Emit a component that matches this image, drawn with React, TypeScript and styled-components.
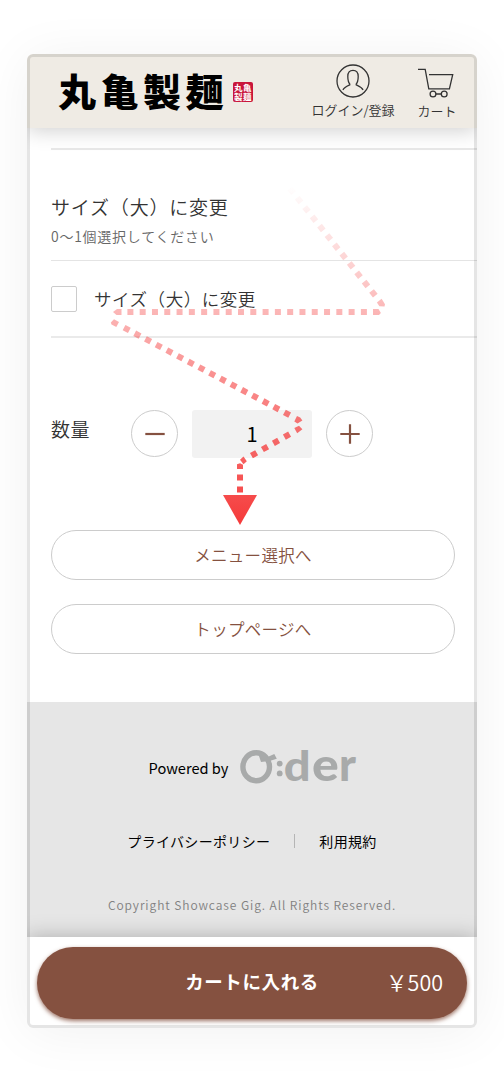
import React from 'react';
import styled, { createGlobalStyle } from 'styled-components';

const GlobalStyle = createGlobalStyle`
  * { box-sizing: border-box; }
  body {
    margin: 0;
    background: #fff;
    font-family: "Noto Sans CJK JP", "Noto Sans", sans-serif;
    font-weight: 350;
    color: #333;
  }
  button { font-family: inherit; font-weight: inherit; margin: 0; padding: 0; cursor: pointer; }
`;

const Page = styled.div`
  height: 1077px;
  padding: 54px 27px 0;
  overflow: hidden;
`;

const Phone = styled.div`
  position: relative;
  display: flex;
  flex-direction: column;
  width: 450px;
  height: 974px;
  border-radius: 6px;
  overflow: hidden;
  background: #fff;
`;

const Glow = styled.div`
  width: 450px;
  border-radius: 6px;
  box-shadow: 0 4px 54px rgba(0, 0, 0, 0.06);
`;

const Bezel = styled.div`
  position: absolute;
  inset: 0;
  z-index: 5;
  border: 3px solid rgba(0, 0, 0, 0.1);
  border-radius: 6px;
  pointer-events: none;
`;

const Header = styled.header`
  position: relative;
  z-index: 2;
  display: flex;
  flex: none;
  height: 74px;
  padding-left: 31px;
  background: #efebe4;
  box-shadow: 0 2px 20px rgba(0, 0, 0, 0.2);
`;

const Brand = styled.div`
  display: flex;
  width: 245px;
  align-items: flex-start;
`;

const BrandName = styled.div`
  width: 175px;
  height: 74px;
  line-height: 72px;
  font-size: 38px;
  font-weight: 900;
  letter-spacing: 4.5px;
  color: #000;
  white-space: nowrap;
`;

const Seal = styled.div`
  display: grid;
  grid-template-columns: 9px 9px;
  grid-template-rows: 9px 9px;
  place-content: center;
  width: 20px;
  height: 20px;
  margin-top: 28px;
  border-radius: 2px;
  background: #c9163b;
  color: #fff;
  font-size: 8.5px;
  font-weight: 700;
  line-height: 8.5px;
`;

const HeaderLink = styled.div<{ $width: number; $top: number }>`
  display: flex;
  flex-direction: column;
  align-items: center;
  width: ${(p) => p.$width}px;
  padding-top: ${(p) => p.$top}px;
  font-size: 13px;
  line-height: 16px;
  white-space: nowrap;
  svg { display: block; }
`;

const HeaderLabel = styled.span`
  margin-top: 4px;
`;

const Main = styled.main`
  flex: none;
  height: 574px;
  padding: 20px 0 0 24px;
`;

const OptionHead = styled.div`
  height: 113px;
  padding-top: 43px;
  border-top: 2px solid #e8e8e8;
  border-bottom: 1px solid #e4e4e4;
`;

const OptionTitle = styled.div`
  font-size: 19px;
  line-height: 28px;
  letter-spacing: 0.8px;
`;

const OptionNote = styled.div`
  margin-top: 5px;
  font-size: 14px;
  line-height: 20px;
  letter-spacing: 0.75px;
  color: #666;
`;

const OptionRow = styled.label`
  display: flex;
  align-items: center;
  height: 77px;
  border-bottom: 2px solid #eaeaea;
  font-size: 17.5px;
  letter-spacing: 0.55px;
`;

const CheckBox = styled.span`
  width: 26px;
  height: 26px;
  margin-right: 17px;
  border: 1px solid #ccc;
  border-radius: 2px;
`;

const Quantity = styled.div`
  display: flex;
  align-items: center;
  height: 48px;
  margin-top: 72px;
`;

const QuantityLabel = styled.span`
  width: 80px;
  margin-top: -11px;
  font-size: 19px;
  letter-spacing: 0.4px;
`;

const RoundButton = styled.button`
  display: flex;
  align-items: center;
  justify-content: center;
  width: 47px;
  height: 47px;
  margin-bottom: 1px;
  border: 1px solid #ccc;
  border-radius: 50%;
  background: #fff;
`;

const Amount = styled.div`
  width: 120px;
  height: 48px;
  margin: 0 14px;
  border-radius: 3px;
  background: #f2f2f2;
  color: #000;
  font-size: 20px;
  font-weight: 400;
  line-height: 48px;
  text-align: center;
`;

const LinkList = styled.div`
  display: flex;
  flex-direction: column;
  gap: 24px;
  width: 404px;
  margin-top: 72px;
`;

const PillLink = styled.button`
  height: 50px;
  border: 1px solid #ccc;
  border-radius: 25px;
  background: #fff;
  color: #855140;
  font-size: 16.5px;
  letter-spacing: 0.3px;
`;

const Footer = styled.footer`
  display: flex;
  flex: none;
  flex-direction: column;
  align-items: center;
  height: 235px;
  background: #e6e6e6;
  color: #000;
`;

const Powered = styled.div`
  display: flex;
  align-items: center;
  gap: 12px;
  height: 36px;
  margin-top: 47px;
  padding-left: 1px;
  font-size: 14.6px;
  font-weight: 400;
  white-space: nowrap;
`;

const Policies = styled.div`
  display: flex;
  align-items: center;
  height: 20px;
  margin-top: 46px;
  font-size: 14px;
  letter-spacing: 0.33px;
  font-weight: 400;
`;

const Divider = styled.span`
  width: 1px;
  height: 14px;
  margin: 0 24px;
  background: #b5b5b5;
`;

const Copyright = styled.div`
  margin-top: 44px;
  font-size: 12px;
  line-height: 20px;
  letter-spacing: 0.92px;
  color: #808080;
  white-space: nowrap;
`;

const BottomBar = styled.div`
  position: relative;
  z-index: 2;
  flex: 1;
  padding: 10px 10px 0;
  background: #fff;
  box-shadow: 0 0 20px rgba(0, 0, 0, 0.25);
`;

const AddButton = styled.button`
  display: grid;
  grid-template-columns: 1fr auto 1fr;
  align-items: center;
  width: 430px;
  height: 72px;
  padding-bottom: 4px;
  border: 0;
  border-radius: 36px;
  background: #855140;
  box-shadow: 0 2px 4px rgba(133, 81, 64, 0.8);
  color: #fff;
`;

const AddLabel = styled.span`
  grid-column: 2;
  font-size: 18.5px;
  font-weight: 700;
  letter-spacing: 0.6px;
`;

const Price = styled.span`
  justify-self: end;
  margin-right: 24px;
  font-size: 21.5px;
`;

const Trail = styled.svg`
  position: absolute;
  left: 0;
  top: 0;
  z-index: 4;
  pointer-events: none;
`;

const UserIcon = () => (
  <svg width="34" height="34" viewBox="0 0 34 34" fill="none" stroke="#333" strokeWidth="1.3">
    <circle cx="17" cy="17" r="16" />
    <path d="M14.2 20.6C12.4 18.6 11.8 15.6 11.8 12.4C11.8 8.5 13.8 6.3 17 6.3S22.2 8.5 22.2 12.4C22.2 15.6 21.6 18.6 19.8 20.6M14.2 20.6C11 22 8.4 22.8 6.9 25.9M19.8 20.6C23 22 25.6 22.8 27.1 25.9" />
  </svg>
);

const CartIcon = () => (
  <svg width="38" height="32" viewBox="0 0 38 32" fill="none" stroke="#333" strokeWidth="1.3">
    <path d="M-0.6 2.3H7.2L10.8 21.8H31.4L34.7 7.7H11" />
    <circle cx="15" cy="27" r="2.9" />
    <circle cx="26.2" cy="27" r="2.9" />
    <path d="M17.9 27H23.3" />
  </svg>
);

const MinusIcon = () => (
  <svg width="20" height="20" viewBox="0 0 20 20" stroke="#855140" strokeWidth="2.2">
    <path d="M0.3 10H19.7" />
  </svg>
);

const PlusIcon = () => (
  <svg width="20" height="20" viewBox="0 0 20 20" stroke="#855140" strokeWidth="2.2">
    <path d="M0.3 10H19.7M10 0.3V19.7" />
  </svg>
);

const LogoText = styled.text`
  font-family: Lato, sans-serif;
  font-weight: 900;
  font-size: 42px;
`;

const OderLogo = () => (
  <svg width="116" height="36" viewBox="0 0 116 36" fill="#a8aaaa" overflow="visible">
    <ellipse cx="16.2" cy="17.8" rx="13.3" ry="14" fill="none" stroke="#a8aaaa" strokeWidth="5.4" />
    <path d="M18.5 5.5L27 8.3L34.3 5L36.8 9.8L29.5 12L21 13Z" />
    <circle cx="39.7" cy="14.6" r="2.9" />
    <circle cx="39.7" cy="24.4" r="2.9" />
    <LogoText transform="translate(43.8 32.2) scale(1.12 0.98)">d</LogoText>
    <LogoText transform="translate(72 32.2) scale(1.19 1.1)">e</LogoText>
    <LogoText transform="translate(99 32.2) scale(1.07 1.1)">r</LogoText>
  </svg>
);

const DashedArrow = () => (
  <Trail width="450" height="974" viewBox="27 54 450 974">
    <defs>
      <linearGradient id="trail" gradientUnits="userSpaceOnUse" x1="0" y1="186" x2="0" y2="525">
        <stop offset="0" stopColor="#f53a3a" stopOpacity="0" />
        <stop offset="1" stopColor="#f53a3a" />
      </linearGradient>
    </defs>
    <g fill="none" stroke="url(#trail)" strokeWidth="6">
      <path d="M289.8 188.35L375.3 295.7" strokeDasharray="6 5.93" />
      <path d="M127.4 312L367.1 312.01" strokeDasharray="6 6.29" />
      <path d="M124.05 327.6L289.65 415.1" strokeDasharray="6 6.09" />
      <path d="M289.6 434.2L251.4 455.7" strokeDasharray="6 6.6" />
    </g>
    <g fill="url(#trail)">
      <path d="M376.9 302.5L381.6 298.7L385 304.3L384.5 306.5L379.4 306.3Z" />
      <path d="M373 309H378.5L380.9 313L379 315H373Z" />
      <path d="M113 312L117 309H121.5V315H116.5Z" />
      <path d="M110.8 322.4L114 319.3L119 322L116.3 327L111.5 324.5Z" />
      <path d="M297 416L300.2 417.5L302.4 420.6L297.5 423.6L294.3 421.6Z" />
      <path d="M299 425.7L302.4 429.3L297.2 433.2L294.3 428.1Z" />
      <path d="M243.5 456.4L246.8 461.3L243.5 464.2L240 459.8Z" />
      <path d="M237 464.3L240 463.3L243 464.8V469H237Z" />
      <path d="M237 474.5H243V480.4H237ZM237 486.5H243V492.4H237Z" />
      <path d="M223 495H257L240 525Z" />
    </g>
  </Trail>
);

export default function App() {
  return (
    <Page>
      <GlobalStyle />
      <Glow>
        <Phone>
          <Header>
            <Brand>
              <BrandName>丸亀製麺</BrandName>
              <Seal>
                <span>丸</span>
                <span>亀</span>
                <span>製</span>
                <span>麺</span>
              </Seal>
            </Brand>
            <HeaderLink $width={100} $top={10}>
              <UserIcon />
              <HeaderLabel>ログイン/登録</HeaderLabel>
            </HeaderLink>
            <HeaderLink $width={68} $top={13}>
              <CartIcon />
              <HeaderLabel>カート</HeaderLabel>
            </HeaderLink>
          </Header>
          <Main>
            <OptionHead>
              <OptionTitle>サイズ（大）に変更</OptionTitle>
              <OptionNote>0〜1個選択してください</OptionNote>
            </OptionHead>
            <OptionRow>
              <CheckBox />
              サイズ（大）に変更
            </OptionRow>
            <Quantity>
              <QuantityLabel>数量</QuantityLabel>
              <RoundButton aria-label="減らす">
                <MinusIcon />
              </RoundButton>
              <Amount>1</Amount>
              <RoundButton aria-label="増やす">
                <PlusIcon />
              </RoundButton>
            </Quantity>
            <LinkList>
              <PillLink>メニュー選択へ</PillLink>
              <PillLink>トップページへ</PillLink>
            </LinkList>
          </Main>
          <Footer>
            <Powered>
              Powered by
              <OderLogo />
            </Powered>
            <Policies>
              <span>プライバシーポリシー</span>
              <Divider />
              <span>利用規約</span>
            </Policies>
            <Copyright>Copyright Showcase Gig. All Rights Reserved.</Copyright>
          </Footer>
          <BottomBar>
            <AddButton>
              <AddLabel>カートに入れる</AddLabel>
              <Price>￥500</Price>
            </AddButton>
          </BottomBar>
          <DashedArrow />
          <Bezel />
        </Phone>
      </Glow>
    </Page>
  );
}
